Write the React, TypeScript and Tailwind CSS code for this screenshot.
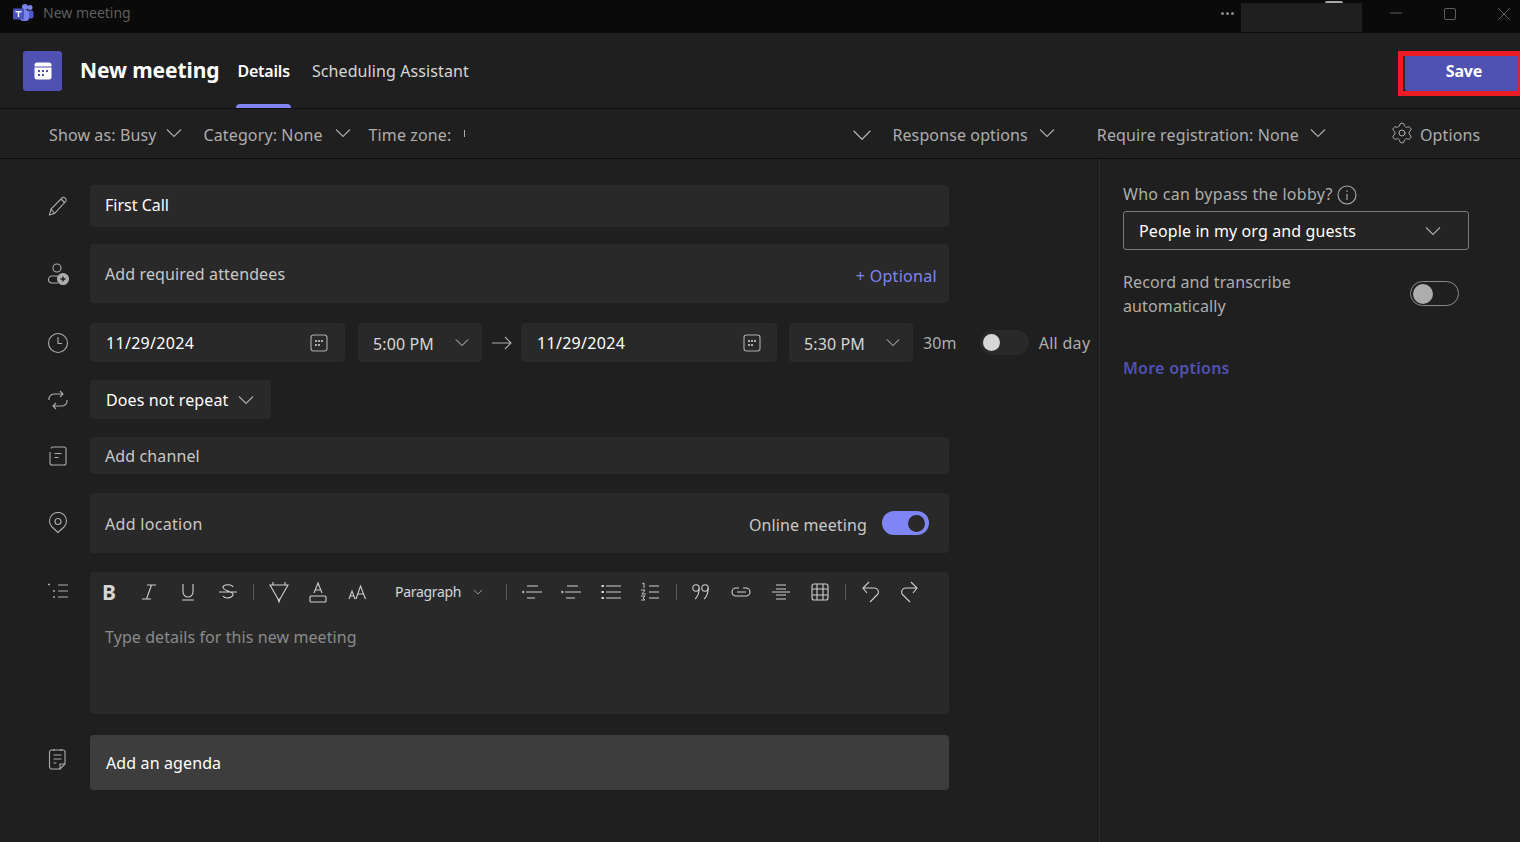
import { Settings } from "lucide-react";
import type { ReactNode } from "react";

function Chevron({ className = "" }: { className?: string }) {
  return (
    <svg viewBox="0 0 16 10" fill="none" stroke="currentColor" strokeWidth="1.1" className={className}>
      <path d="M1 1.5 8 8.5l7-7" />
    </svg>
  );
}

function Ico({ children, w = 22, h = 22, vb = "0 0 22 22", sw = 1.1, className = "text-[#adadad]" }: { children: ReactNode; w?: number; h?: number; vb?: string; sw?: number; className?: string }) {
  return (
    <svg width={w} height={h} viewBox={vb} fill="none" stroke="currentColor" strokeWidth={sw} className={`shrink-0 ${className}`}>
      {children}
    </svg>
  );
}

function CalIcon() {
  return (
    <Ico w={18} h={18} vb="0 0 18 18">
      <rect x="1" y="1" width="16" height="16" rx="2.5" />
      <g fill="currentColor" stroke="none">
        <rect x="5" y="6" width="2" height="2" />
        <rect x="8" y="6" width="2" height="2" />
        <rect x="11" y="6" width="2" height="2" />
        <rect x="5" y="10" width="2" height="2" />
        <rect x="8" y="10" width="2" height="2" />
      </g>
    </Ico>
  );
}

function Row({ icon, children, className = "" }: { icon: ReactNode; children: ReactNode; className?: string }) {
  return (
    <div className={`flex items-center ${className}`}>
      <div className="flex w-[90px] shrink-0 justify-center pl-[26px]">{icon}</div>
      {children}
    </div>
  );
}

function Sep({ className = "" }: { className?: string }) {
  return <span className={`h-4 w-px shrink-0 bg-[#5c5c5c] ${className}`} />;
}

function Tool({ children, className = "", h = 20 }: { children: ReactNode; className?: string; h?: number }) {
  return (
    <Ico w={20} h={h} vb={`0 0 20 ${h}`} className={`text-[#d0d0d0] ${className}`}>
      {children}
    </Ico>
  );
}

const field = "flex w-[859px] items-center rounded bg-[#292929] pl-[15px]";

function Toolbar() {
  return (
    <div className="flex h-[40px] items-center pl-[12px] text-[#d0d0d0]">
      <span className="w-[13px] text-[21px] font-bold leading-none text-[#d6d6d6]">B</span>
      <Tool className="ml-[24px]"><path d="M8 3h9M3 17h9M12.500 3 7.500 17" /></Tool>
      <Tool className="ml-[19px]"><path d="M5 2v8a5 5 0 0 0 10 0V2M4 18h12" /></Tool>
      <Tool className="ml-[20px]"><path d="M1 10h18M15 5c-1-2.500-9-3.500-10 0s9 4 10 7-7 6-10 2" /></Tool>
      <Sep className="ml-[15px]" />
      <Tool className="ml-[15px]" h={22}><path d="M1 4h18l-8 14H9ZM4 4V1M16 4V1M9 18l1 3 1-3" /></Tool>
      <Tool className="ml-[19px]" h={22}><path d="M6 12l4-10 4 10M7 9h6" /><rect x="2" y="15" width="16" height="6" rx="1" /></Tool>
      <Tool className="ml-[20px]"><path d="M1 17l3-8 3 8M2 14h4M8 17l4.500-13 5 13M9.500 12h6" /></Tool>
      <span className="mb-[2px] ml-[27px] text-[14px] tracking-[-0.3px] text-[#d6d6d6]">Paragraph</span>
      <Chevron className="ml-[12px] h-[6px] w-[10px]" />
      <Sep className="ml-[23px]" />
      <Tool className="ml-[15px]"><path d="M5 4h11M4 10h16M5 16h8M2 9l-1.500 1 1.500 1" /></Tool>
      <Tool className="ml-[19px]"><path d="M6 4h11M4 10h16M5 16h9M0.500 9 2 10l-1.500 1" /></Tool>
      <Tool className="ml-[20px]"><path d="M5 4h15M5 10h15M5 16h15" /><path d="M0.500 4h2.500M0.500 10h2.500M0.500 16h2.500" strokeWidth="2" /></Tool>
      <Tool className="ml-[19px]"><path d="M9 4h10M9 10h10M9 16h10" /><path d="M2 2l2-1v5M1 8h4l-3 4h4M1 14h4l-2 2 2 2H1" strokeWidth="0.9" /></Tool>
      <Sep className="ml-[16px]" />
      <Tool className="ml-[14px]">
        <circle cx="5" cy="6" r="3.200" />
        <circle cx="14" cy="6" r="3.200" />
        <path d="M8.200 6c0 5-2 9-4 11M17.200 6c0 5-2 9-4 11" />
      </Tool>
      <Tool className="ml-[20px]"><path d="M8 6H5a4 4 0 0 0 0 8h10a4 4 0 0 0 0-8h-3M6 10h9" /></Tool>
      <Tool className="ml-[20px]"><path d="M5 3h10M5 7h10M1 10h18M5 13h10M5 17h10" /></Tool>
      <Tool className="ml-[19px]"><rect x="2" y="2" width="16" height="16" rx="2" /><path d="M7 2v16M13 2v16M2 7h16M2 13h16" /></Tool>
      <Sep className="ml-[15px]" />
      <Tool className="ml-[15px]" h={22}><path d="M8 1 2 7l4 5M2 7h11a4 4 0 0 1 3 7l-7 7" /></Tool>
      <Tool className="ml-[18px]" h={22}><path d="M12 1l6 6-4 5M18 7H7a4 4 0 0 0-3 7l7 7" /></Tool>
    </div>
  );
}

export default function App() {
  return (
    <div className="flex h-[842px] w-[1520px] flex-col overflow-hidden bg-[#1f1f1f] font-['Noto_Sans','Open_Sans',sans-serif] text-[16px] tracking-[0.12px] text-[#d6d6d6]">
      {/* window title bar */}
      <div className="flex h-[33px] shrink-0 items-center bg-[#0a0a0a] pl-[13px]">
        <div className="mb-[8px] flex items-center">
          <svg width="21" height="18" viewBox="0 0 21 18" className="shrink-0">
            <circle cx="17" cy="3.500" r="2.500" fill="#7b83eb" />
            <circle cx="12" cy="3" r="3" fill="#7b83eb" />
            <rect x="14" y="6.500" width="6.500" height="8" rx="2" fill="#5059c9" />
            <rect x="7" y="6" width="9" height="11" rx="3" fill="#7b83eb" />
            <rect x="0" y="4.500" width="11" height="11" rx="1" fill="#4b53bc" />
            <rect x="2.500" y="7" width="6" height="1.400" fill="#fff" />
            <rect x="4.800" y="7" width="1.400" height="6" fill="#fff" />
          </svg>
          <span className="ml-[9px] text-[14px] tracking-normal text-[#5e5e5e]">New meeting</span>
        </div>
        <div className="ml-auto flex h-full items-center">
          <div className="mb-[7px] mr-[7px] flex gap-[2px]">
            <span className="h-[3px] w-[3px] rounded-full bg-[#8a8a8a]" />
            <span className="h-[3px] w-[3px] rounded-full bg-[#8a8a8a]" />
            <span className="h-[3px] w-[3px] rounded-full bg-[#8a8a8a]" />
          </div>
          <div className="relative mt-[1px] h-[29px] w-[121px] bg-[#1f1f1f]">
            <span className="absolute -top-[2px] left-[84px] h-[2px] w-[18px] rounded-t bg-[#a8a8a8]" />
          </div>
          <svg width="12" height="2" viewBox="0 0 12 2" className="mb-[8px] ml-[28px] text-[#5e5e5e]"><path d="M0 1h12" stroke="currentColor" /></svg>
          <svg width="12" height="12" viewBox="0 0 12 12" fill="none" className="mb-[5px] ml-[42px] text-[#5e5e5e]"><rect x=".5" y=".5" width="11" height="11" rx="1.500" stroke="currentColor" /></svg>
          <svg width="14" height="14" viewBox="0 0 14 14" className="mb-[5px] ml-[41px] mr-[9px] text-[#5e5e5e]"><path d="M1 1l12 12M13 1 1 13" stroke="currentColor" /></svg>
        </div>
      </div>

      {/* title + tabs */}
      <div className="flex h-[76px] shrink-0 items-center border-b border-[#0f0f0f] pl-[23px]">
        <div className="flex h-[40px] w-[39px] items-center justify-center rounded-[3px] bg-[#4f52b2]">
          <svg width="18" height="18" viewBox="0 0 18 18">
            <path d="M3 0.500h12a2.500 2.500 0 0 1 2.500 2.500v1.500H.5V3A2.500 2.500 0 0 1 3 .5Z" fill="#fff" />
            <path d="M.5 5.500h17V15a2.500 2.500 0 0 1-2.500 2.500H3A2.500 2.500 0 0 1 .5 15Z" fill="#fff" />
            <g fill="#4f52b2">
              <rect x="4" y="8" width="2" height="2" />
              <rect x="8" y="8" width="2" height="2" />
              <rect x="12" y="8" width="2" height="2" />
              <rect x="4" y="12" width="2" height="2" />
              <rect x="8" y="12" width="2" height="2" />
            </g>
          </svg>
        </div>
        <span className="ml-[18px] text-[21px] font-bold leading-none tracking-[-0.1px] text-white">New meeting</span>
        <div className="relative ml-[17px] flex h-full items-center px-[1px]">
          <span className="text-[16px] font-semibold tracking-[-0.2px] text-white">Details</span>
          <span className="absolute bottom-0 left-0 h-[4px] w-full rounded-t-sm bg-[#7f85f5]" />
        </div>
        <span className="ml-[21px] text-[16px] tracking-[0.1px] text-[#d6d6d6]">Scheduling Assistant</span>
        <div className="ml-auto mt-[5px] flex h-[45px] w-[122px] border-[5px] border-r-[3px] border-[#ed1c24]">
          <div className="flex h-full w-full items-center justify-center rounded-bl-sm border-l-[2px] border-[#2b2b3d] bg-[#4f52b2] text-[16px] font-bold tracking-[-0.2px] text-white">
            <span className="mb-[4px] pl-[6px]">Save</span>
          </div>
        </div>
      </div>

      {/* options bar */}
      <div className="flex h-[50px] shrink-0 items-center border-b border-[#0f0f0f] pl-[49px] pt-[2px] text-[#adadad]">
        <span>Show as: Busy</span>
        <Chevron className="mb-[3px] ml-[9px] h-[10px] w-[16px]" />
        <span className="ml-[22px]">Category: None</span>
        <Chevron className="mb-[3px] ml-[12px] h-[10px] w-[16px]" />
        <span className="ml-[18px]">Time zone:</span>
        <span className="mb-[2px] ml-[13px] h-[7px] w-px bg-[#adadad]" />
        <Chevron className="ml-[387px] h-[12px] w-[20px]" />
        <span className="ml-[20px]">Response options</span>
        <Chevron className="mb-[3px] ml-[11px] h-[10px] w-[16px]" />
        <span className="ml-[42px]">Require registration: None</span>
        <Chevron className="mb-[3px] ml-[11px] h-[10px] w-[16px]" />
        <Settings size={24} strokeWidth={1} className="mb-[3px] ml-[64px]" />
        <span className="ml-[6px]">Options</span>
      </div>

      <div className="flex min-h-0 flex-1">
        {/* form */}
        <div className="flex w-[1099px] shrink-0 flex-col pt-[26px]">
          <Row icon={<Ico><path d="M2.500 20l1.500-6L15.500 2.500c1.500-1 4.500 1.500 3.500 3.500L7.500 18.500Zm1.500-6 3.500 4.500M14 4l4 4" /></Ico>}>
            <div className={`${field} h-[42px] tracking-normal text-white`}><span className="-mt-[2px]">First Call</span></div>
          </Row>
          <Row className="mt-[17px]" icon={<Ico><circle cx="10" cy="5" r="4" /><path d="M11 13H5a3.500 3.500 0 0 0 0 7h6" /><circle cx="16" cy="16" r="5.500" fill="currentColor" /><path d="M16 13.500v5M13.500 16h5" stroke="#1f1f1f" strokeWidth="1.400" /></Ico>}>
            <div className={`${field} h-[59px] justify-between pr-[12px]`}>
              <span className="text-[#c8c8c8]">Add required attendees</span>
              <span className="mt-[4px] tracking-[0.3px] text-[#7f85f5]">+ Optional</span>
            </div>
          </Row>
          <Row className="mt-[20px]" icon={<Ico><circle cx="11" cy="11" r="9.500" /><path d="M11 5v6.500h4" /></Ico>}>
            <div className="flex h-[39px] w-[255px] items-center justify-between rounded bg-[#292929] pl-[16px] pr-[17px] tracking-[0.3px] text-white">
              11/29/2024
              <CalIcon />
            </div>
            <div className="ml-[13px] flex h-[39px] w-[124px] items-center justify-between rounded bg-[#292929] pl-[15px] pr-[13px]">
              <span className="mt-[2px]">5:00 PM</span>
              <Chevron className="h-[9px] w-[14px]" />
            </div>
            <svg width="22" height="16" viewBox="0 0 22 16" fill="none" stroke="currentColor" strokeWidth="1.100" className="ml-[9px] shrink-0 text-[#adadad]">
              <path d="M1 8h19M14 2l6 6-6 6" />
            </svg>
            <div className="ml-[8px] flex h-[39px] w-[256px] items-center justify-between rounded bg-[#292929] pl-[16px] pr-[16px] tracking-[0.3px] text-white">
              11/29/2024
              <CalIcon />
            </div>
            <div className="ml-[12px] flex h-[39px] w-[124px] items-center justify-between rounded bg-[#292929] pl-[15px] pr-[13px]">
              <span className="mt-[2px]">5:30 PM</span>
              <Chevron className="h-[9px] w-[14px]" />
            </div>
            <span className="ml-[10px] text-[#adadad]">30m</span>
            <div className="mb-[1px] ml-[23px] flex h-[25px] w-[49px] items-center rounded-full bg-[#292929] pl-[3px]">
              <span className="h-[17px] w-[17px] rounded-full bg-[#d6d6d6]" />
            </div>
            <span className="ml-[10px] tracking-[0.3px] text-[#adadad]">All day</span>
          </Row>
          <Row className="mt-[18px]" icon={<Ico><path d="M16 5H7a5 5 0 0 0-5 6M13 2l3 3-3 3M6 17h9a5 5 0 0 0 5-6M9 14l-3 3 3 3" /></Ico>}>
            <div className="flex h-[39px] w-[181px] items-center rounded bg-[#292929] pl-[16px] text-white">
              Does not repeat
              <Chevron className="ml-[10px] h-[10px] w-[16px] text-[#adadad]" />
            </div>
          </Row>
          <Row className="mt-[18px]" icon={<Ico w={20} h={20} vb="0 0 20 20"><path d="M3 2.500a2 2 0 0 1 2-1.500h11a2 2 0 0 1 2 2v14a2 2 0 0 1-2 2H4a2 2 0 0 1-2-2V6M6.500 7.500h7M6.500 11.500h4" /></Ico>}>
            <div className={`${field} h-[37px] text-[#c8c8c8]`}>Add channel</div>
          </Row>
          <Row className="mt-[19px]" icon={<Ico><circle cx="11" cy="9.500" r="3" /><path d="M11 20.500 5 15a8.500 8.500 0 1 1 12 0Z" /></Ico>}>
            <div className={`${field} h-[60px] justify-between pr-[20px]`}>
              <span className="mt-[2px] tracking-[0.3px] text-[#c8c8c8]">Add location</span>
              <div className="flex items-center gap-[15px]">
                <span className="mt-[3px] text-[#c8c8c8]">Online meeting</span>
                <div className="flex h-[24px] w-[47px] items-center justify-end rounded-full bg-[#7f85f5] pr-[4px]">
                  <span className="h-[17px] w-[17px] rounded-full bg-[#292929]" />
                </div>
              </div>
            </div>
          </Row>
          <Row className="mt-[19px] items-start" icon={<Ico className="mt-[10px] text-[#adadad]"><path d="M11 3h10M11 9h10M11 15h10" /><path d="M1 2.500h2M6 9h2M6 15h2" strokeWidth="1.400" /></Ico>}>
            <div className="h-[142px] w-[859px] rounded bg-[#292929]">
              <Toolbar />
              <p className="mt-[13px] pl-[15px] tracking-[0.08px] text-[#8a8a8a]">Type details for this new meeting</p>
            </div>
          </Row>
          <Row className="mt-[21px]" icon={<Ico w={20} h={22} vb="0 0 20 22" className="mb-[8px] text-[#adadad]"><path d="M12 21H4a2.500 2.500 0 0 1-2.500-2.500V4A2 2 0 0 1 4 2h11a2 2 0 0 1 2 2v12l-5 5v-5h5M6 1v2M13 1v2M5.500 7h8M5.500 11h8M5.500 15h3" /></Ico>}>
            <div className="flex h-[55px] w-[859px] items-center rounded bg-[#3d3d3d] pl-[16px] text-white">Add an agenda</div>
          </Row>
        </div>

        {/* side panel */}
        <div className="flex-1 border-l border-[#2e2e2e] pl-[23px] pt-[23px]">
          <div className="flex items-center gap-[4px] tracking-[0.28px] text-[#adadad]">
            Who can bypass the lobby?
            <svg width="20" height="20" viewBox="0 0 20 20" fill="none" stroke="currentColor" strokeWidth="1.100" className="mt-[2px]">
              <circle cx="10" cy="10" r="9" />
              <path d="M10 9v6M10 5.500v1.500" />
            </svg>
          </div>
          <div className="mt-[5px] flex h-[39px] w-[346px] items-center justify-between rounded-[3px] border border-[#7a7a7a] bg-[#242424] pl-[15px] pr-[27px] text-white">
            People in my org and guests
            <Chevron className="h-[10px] w-[16px] text-[#adadad]" />
          </div>
          <div className="mt-[20px] flex w-[336px] items-start justify-between text-[#adadad]">
            <div className="w-[200px] leading-[24px]">Record and transcribe automatically</div>
            <div className="mt-[11px] flex h-[25px] w-[49px] items-center rounded-full border border-[#8a8a8a] pl-[2px]">
              <span className="h-[20px] w-[20px] rounded-full bg-[#adadad]" />
            </div>
          </div>
          <div className="mt-[38px] font-semibold tracking-[0.25px] text-[#4f52b2]">More options</div>
        </div>
      </div>
    </div>
  );
}
